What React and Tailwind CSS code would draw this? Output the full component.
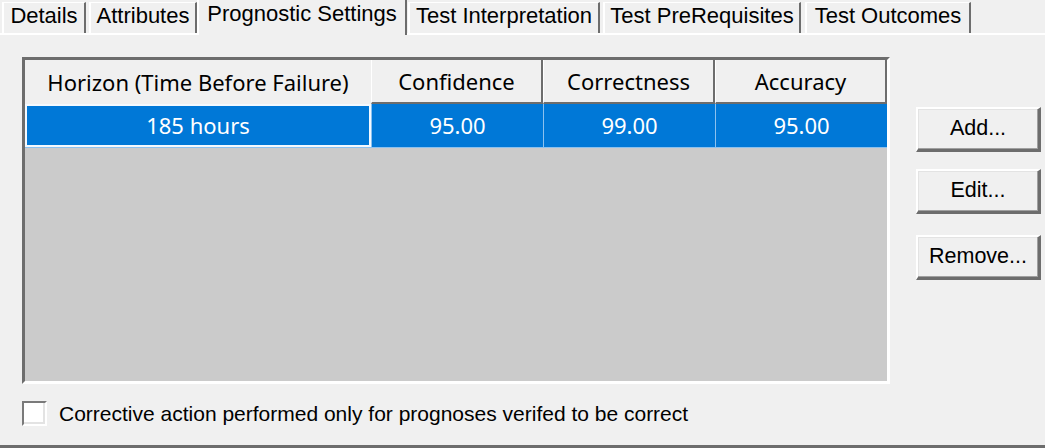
import React from "react";

const tabs = [
  { label: "Details", w: "w-[84px]", ml: "ml-[2px]" },
  { label: "Attributes", w: "w-[108px]", ml: "ml-[3px]" },
  { label: "Prognostic Settings", w: "w-[210px]", ml: "ml-0", active: true },
  { label: "Test Interpretation", w: "w-[192px]", ml: "ml-[1px]" },
  { label: "Test PreRequisites", w: "w-[198px]", ml: "ml-[3px]" },
  { label: "Test Outcomes", w: "w-[166px]", ml: "ml-[4px]" },
];

const columns = [
  { label: "Horizon (Time Before Failure)", w: "w-[346px]", value: "185 hours" },
  { label: "Confidence", w: "w-[172px]", value: "95.00" },
  { label: "Correctness", w: "w-[172px]", value: "99.00" },
  { label: "Accuracy", w: "w-[172px]", value: "95.00" },
];

const gridFont = "font-['Noto_Sans','Open_Sans',sans-serif] text-[22px]";

function Tab({ tab }) {
  if (tab.active) {
    return (
      <div
        className={`${tab.w} ${tab.ml} h-[35px] mb-[-2px] relative z-10 bg-[#f0f0f0] border-l-2 border-l-white border-r-2 border-r-[#6d6d6d] flex justify-center pt-[2px] leading-[24px] text-[22px]`}
      >
        {tab.label}
      </div>
    );
  }
  return (
    <div
      className={`${tab.w} ${tab.ml} h-[31px] bg-[#f0f0f0] border-t border-t-white border-l-2 border-l-white border-r-2 border-r-[#6d6d6d] flex justify-center pt-[1px] leading-[24px] text-[22px]`}
    >
      {tab.label}
    </div>
  );
}

function WinButton({ children, className = "" }) {
  return (
    <button
      className={`w-[125px] h-[45px] bg-[#f0f0f0] border-t-2 border-l-2 border-t-white border-l-white border-b-[3px] border-r-[3px] border-b-[#6d6d6d] border-r-[#6d6d6d] shadow-[inset_-1px_-1px_0_#a0a0a0,inset_1px_1px_0_#e3e3e3] flex items-center justify-center text-[21.5px] leading-none ${className}`}
    >
      {children}
    </button>
  );
}

export default function App() {
  return (
    <div className="w-[1045px] h-[448px] bg-[#f0f0f0] overflow-hidden font-['Liberation_Sans',Arial,sans-serif] text-[21px] text-black">
      <div className="flex items-end h-[33px]">
        {tabs.map((t) => (
          <Tab key={t.label} tab={t} />
        ))}
      </div>

      <div className="h-[415px] border-t-2 border-t-white border-b-[3px] border-b-[#6d6d6d] flex">
        <div className="flex flex-col pl-[22px]">
          <div className="mt-[22px] w-[868px] h-[327px] bg-[#cbcbcb] border-t-[3px] border-l-[3px] border-t-[#6d6d6d] border-l-[#6d6d6d] border-r-[3px] border-b-[3px] border-r-white border-b-white flex flex-col">
            <div className={`flex h-[44px] ${gridFont}`}>
              {columns.map((c, i) => (
                <div
                  key={c.label}
                  className={`${c.w} bg-[#f0f0f0] flex items-center justify-center ${
                    i === 0
                      ? ""
                      : "border-l border-l-white border-r-2 border-r-[#6d6d6d] border-b-2 border-b-[#6d6d6d]"
                  }`}
                >
                  {c.label}
                </div>
              ))}
            </div>
            <div className={`flex h-[44px] bg-[#0078d7] text-white border-b border-b-[#8cc1ee] ${gridFont}`}>
              {columns.map((c, i) => (
                <div
                  key={c.label}
                  className={`${c.w} flex items-center justify-center ${
                    i === 0 ? "border-2 border-[#f4f9fe]" : "border-l border-l-[#8cc1ee]"
                  }`}
                >
                  {c.value}
                </div>
              ))}
            </div>
          </div>

          <label className="mt-[17px] flex items-center">
            <span className="w-[25px] h-[25px] bg-white border-t-2 border-l-2 border-t-[#7a7a7a] border-l-[#7a7a7a] border-b-2 border-r-2 border-b-white border-r-white shadow-[inset_-2px_-2px_0_#e3e3e3]" />
            <span className="ml-[12px] leading-[25px]">
              Corrective action performed only for prognoses verifed to be correct
            </span>
          </label>
        </div>

        <div className="ml-[26px] flex flex-col">
          <WinButton className="mt-[72px]">Add...</WinButton>
          <WinButton className="mt-[17px]">Edit...</WinButton>
          <WinButton className="mt-[21px]">Remove...</WinButton>
        </div>
      </div>
    </div>
  );
}
